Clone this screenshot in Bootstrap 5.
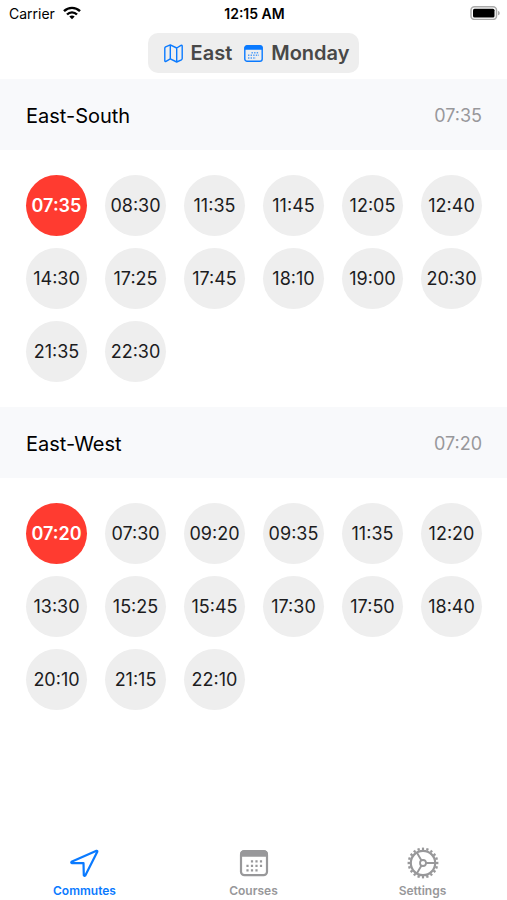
<!DOCTYPE html>
<html lang="en">
<head>
<meta charset="utf-8">
<meta name="viewport" content="width=device-width, initial-scale=1">
<title>Commutes</title>
<link href="https://cdn.jsdelivr.net/npm/bootstrap@5.3.0/dist/css/bootstrap.min.css" rel="stylesheet">
<style>
  body { font-family: Inter, "Liberation Sans", sans-serif; color: #000; background: #fff; }
  svg { display: block; flex: none; }
  .status-bar { display: grid; grid-template-columns: 1fr auto 1fr; height: 28px; padding: 0 7px 0 9px; font-size: 14px; line-height: 28px; }
  .status-bar svg { margin-bottom: 2px; }
  .status-time { font-weight: 600; }
  .top-bar { height: 51px; padding-top: 5px; }
  .picker { height: 40px; padding: 0 10px 0 16px; gap: 12px; border: 0; border-radius: 10px; background: #eee; color: #484848; font-size: 20px; font-weight: 600; line-height: 40px; }
  .tint { color: #0a7aff; }
  .route-head { height: 71px; padding: 2px 25px 0 26px; background: #f8f9fb; }
  .route-name { font-size: 20px; line-height: 24px; font-weight: 400; }
  .next-time { font-size: 18px; line-height: 24px; color: #98989b; }
  .times { display: grid; grid-template-columns: repeat(6, 1fr); gap: 12px 18px; padding: 25px 25px 25px 26px; }
  .time { aspect-ratio: 1; border-radius: 50%; background: #eee; color: #1c1c1e; font-size: 18px; line-height: 24px; }
  .time.upcoming { background: #ff3b30; color: #fff; font-weight: 600; }
  .tabs { height: 62px; padding-bottom: 1px; }
  .tab-link { color: #98989a; font-size: 12px; line-height: 16px; font-weight: 600; gap: 4px; }
  .tab-link.active { color: #0a7aff; }
</style>
</head>
<body>
<div class="d-flex flex-column min-vh-100">
  <header>
    <div class="status-bar">
      <div class="d-flex align-items-center gap-2"><span>Carrier</span>
        <svg width="18" height="14" viewBox="0 0 18 14" fill="none" stroke="#000" stroke-width="2.4" aria-hidden="true"><path d="M1 5.2C5.5.7 12.500.7 17 5.200"/><path d="M4 8.500C6.800 5.600 11.200 5.600 14 8.500"/><path d="M9 13.300 6.300 10.600C7.800 9.200 10.200 9.200 11.700 10.600Z" fill="#000" stroke="none"/></svg>
      </div>
      <div class="status-time">12:15 AM</div>
      <div class="d-flex align-items-center justify-content-end">
        <svg width="30" height="14" viewBox="0 0 30 14" aria-label="Battery full"><rect x="1" y=".8" width="25.500" height="12.600" rx="3.500" fill="#fff" stroke="#aaa" stroke-width="1.500"/><rect x="3" y="2.800" width="21.500" height="8.600" rx="1.500"/><path d="M28 5c2.300.5 2.300 3.800 0 4.300z" fill="#aaa"/></svg>
      </div>
    </div>
    <div class="top-bar d-flex justify-content-center align-items-start">
      <button type="button" class="picker d-flex align-items-center">
        <span class="d-flex align-items-center gap-2">
          <svg class="tint" width="19" height="19" viewBox="0 0 19 19" fill="none" stroke="currentColor" stroke-width="1.400" stroke-linejoin="round" aria-hidden="true"><path d="M.8 4.200Q.8 3.300 1.600 2.800L6.300.9 12.700 4 17 1.400Q18.200.9 18.200 2.200V14.500Q18.200 15.300 17.400 15.800L12.700 18 6.300 14.900 2 17.400Q.8 17.900.8 16.700ZM6.300.9V14.900M12.700 4V18"/></svg>
          <span>East</span>
        </span>
        <span class="d-flex align-items-center gap-2">
          <svg class="tint" width="19" height="17" viewBox="0 0 19 17" fill="none" stroke="currentColor" aria-hidden="true"><rect x=".8" y=".8" width="17.400" height="15.400" rx="2.300" stroke-width="1.400"/><path d="M.5 4.700V3Q.5.500 3 .5H16Q18.500.5 18.500 3V4.700Z" fill="currentColor" stroke="none"/><path d="M7.500 7.700h7.500M4 10.300h11M4 13h8" stroke-width="1.400" stroke-dasharray="1.400 1.200" opacity=".7"/></svg>
          <span>Monday</span>
        </span>
      </button>
    </div>
  </header>

  <main class="flex-grow-1">
    <section>
      <div class="route-head d-flex align-items-center justify-content-between">
        <h2 class="route-name m-0">East-South</h2><span class="next-time">07:35</span>
      </div>
      <ul class="times list-unstyled m-0">
        <li class="time upcoming d-flex align-items-center justify-content-center">07:35</li>
        <li class="time d-flex align-items-center justify-content-center">08:30</li>
        <li class="time d-flex align-items-center justify-content-center">11:35</li>
        <li class="time d-flex align-items-center justify-content-center">11:45</li>
        <li class="time d-flex align-items-center justify-content-center">12:05</li>
        <li class="time d-flex align-items-center justify-content-center">12:40</li>
        <li class="time d-flex align-items-center justify-content-center">14:30</li>
        <li class="time d-flex align-items-center justify-content-center">17:25</li>
        <li class="time d-flex align-items-center justify-content-center">17:45</li>
        <li class="time d-flex align-items-center justify-content-center">18:10</li>
        <li class="time d-flex align-items-center justify-content-center">19:00</li>
        <li class="time d-flex align-items-center justify-content-center">20:30</li>
        <li class="time d-flex align-items-center justify-content-center">21:35</li>
        <li class="time d-flex align-items-center justify-content-center">22:30</li>
      </ul>
    </section>
    <section>
      <div class="route-head d-flex align-items-center justify-content-between">
        <h2 class="route-name m-0">East-West</h2><span class="next-time">07:20</span>
      </div>
      <ul class="times list-unstyled m-0">
        <li class="time upcoming d-flex align-items-center justify-content-center">07:20</li>
        <li class="time d-flex align-items-center justify-content-center">07:30</li>
        <li class="time d-flex align-items-center justify-content-center">09:20</li>
        <li class="time d-flex align-items-center justify-content-center">09:35</li>
        <li class="time d-flex align-items-center justify-content-center">11:35</li>
        <li class="time d-flex align-items-center justify-content-center">12:20</li>
        <li class="time d-flex align-items-center justify-content-center">13:30</li>
        <li class="time d-flex align-items-center justify-content-center">15:25</li>
        <li class="time d-flex align-items-center justify-content-center">15:45</li>
        <li class="time d-flex align-items-center justify-content-center">17:30</li>
        <li class="time d-flex align-items-center justify-content-center">17:50</li>
        <li class="time d-flex align-items-center justify-content-center">18:40</li>
        <li class="time d-flex align-items-center justify-content-center">20:10</li>
        <li class="time d-flex align-items-center justify-content-center">21:15</li>
        <li class="time d-flex align-items-center justify-content-center">22:10</li>
      </ul>
    </section>
  </main>

  <nav class="tabs row row-cols-3 g-0 text-center" aria-label="Main">
    <a href="#commutes" class="tab-link active col d-flex flex-column align-items-center justify-content-end text-decoration-none" aria-current="page">
      <svg width="32" height="32" viewBox="0 0 32 32" fill="none" stroke="currentColor" stroke-width="2.200" stroke-linejoin="round" aria-hidden="true"><path d="M27.500 3.800 2.500 14.800Q1.800 15.800 3 16.100H14.500L14.800 28.200Q15.400 29.400 16.300 28.500L28.300 4.800Q28.500 3.500 27.500 3.800Z"/></svg>
      <span>Commutes</span>
    </a>
    <a href="#courses" class="tab-link col d-flex flex-column align-items-center justify-content-end text-decoration-none">
      <svg width="32" height="32" viewBox="0 0 32 32" fill="none" stroke="currentColor" aria-hidden="true"><rect x="3" y="4.200" width="26" height="24" rx="3.500" stroke-width="2.200"/><path d="M2 9.800V7Q2 3.200 6 3.200H26Q30 3.200 30 7V9.800Z" fill="currentColor" stroke="none"/><path d="M12.900 14.300H24.500M8.400 18.800H24.500M8.400 23.300H20" stroke-width="2.200" stroke-dasharray="2.200 2.300"/></svg>
      <span>Courses</span>
    </a>
    <a href="#settings" class="tab-link col d-flex flex-column align-items-center justify-content-end text-decoration-none">
      <svg width="32" height="32" viewBox="0 0 32 32" fill="none" stroke="currentColor" aria-hidden="true"><circle cx="16" cy="16" r="12.200" stroke-width="2.200"/><circle cx="16" cy="16" r="14.200" stroke-width="2.400" pathLength="80" stroke-dasharray="2 2" stroke-dashoffset="1"/><circle cx="16" cy="16" r="3" stroke-width="1.800"/><path d="M19 16H28M14.500 13.400 9.800 5.400M14.500 18.600 9.800 26.600" stroke-width="1.900"/></svg>
      <span>Settings</span>
    </a>
  </nav>
</div>
<script src="https://cdn.jsdelivr.net/npm/bootstrap@5.3.0/dist/js/bootstrap.bundle.min.js"></script>
</body>
</html>
